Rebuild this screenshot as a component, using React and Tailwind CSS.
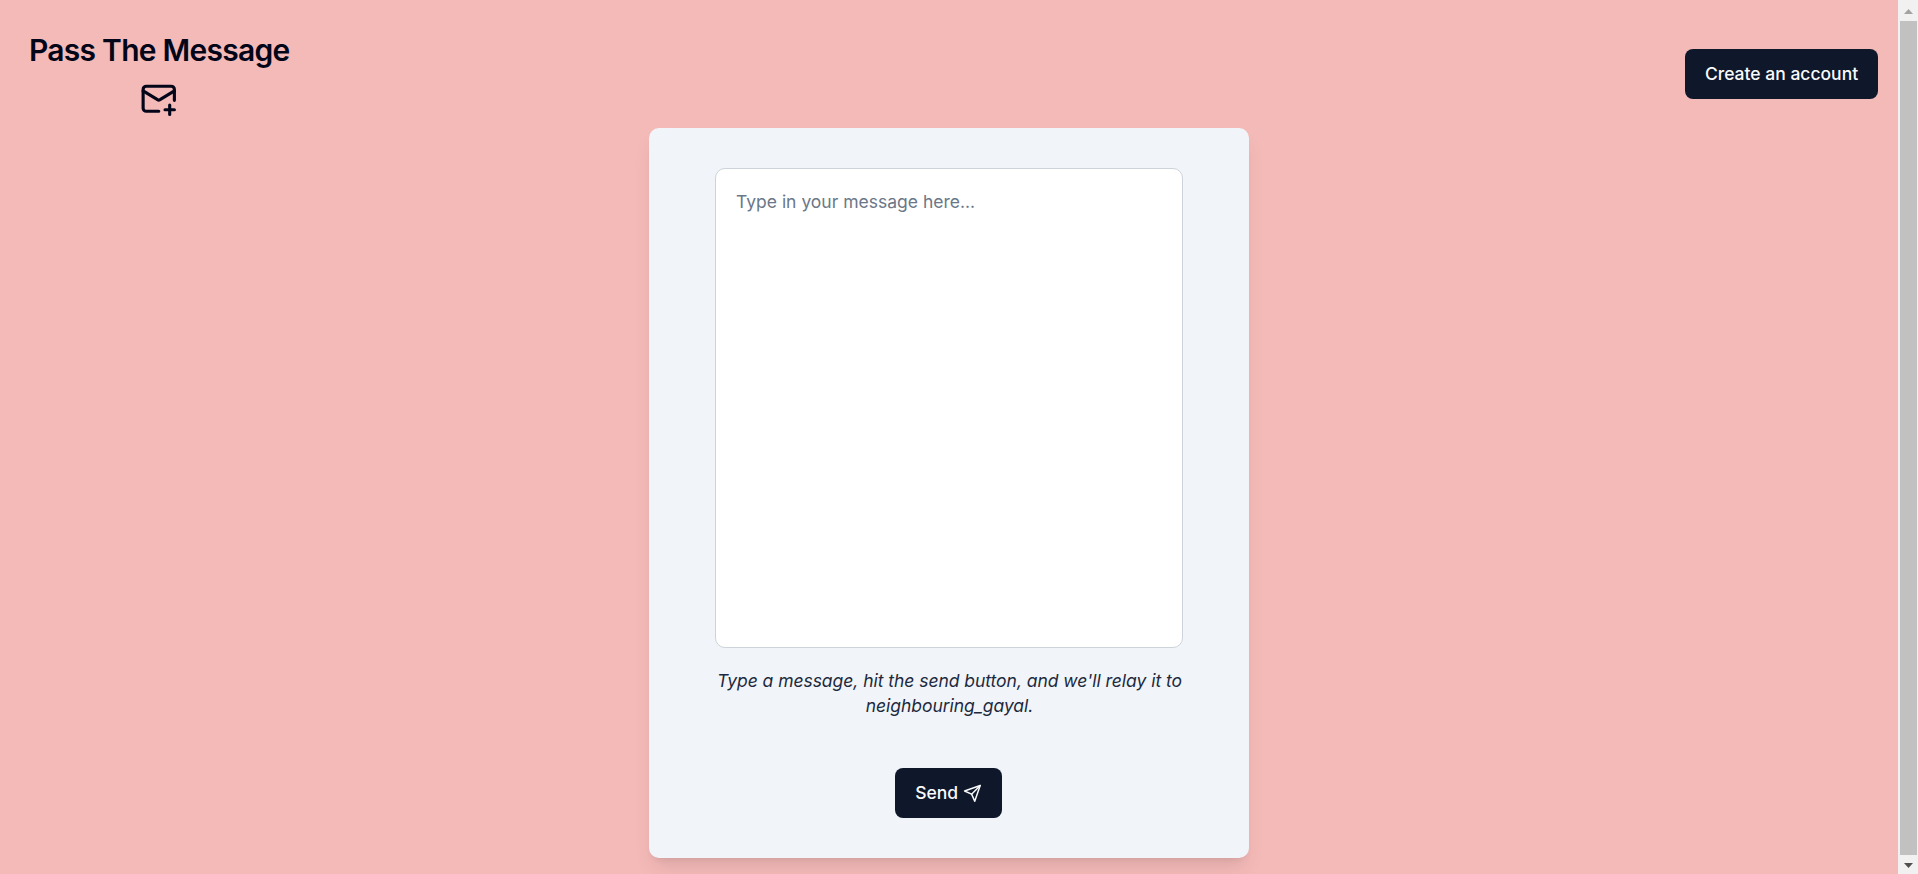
import React from "react";

function MailPlusIcon({ className }) {
  return (
    <svg viewBox="0 0 24 24" fill="none" stroke="currentColor" strokeWidth="2" strokeLinecap="round" strokeLinejoin="round" className={className}>
      <path d="M22 13V6a2 2 0 0 0-2-2H4a2 2 0 0 0-2 2v12c0 1.1.9 2 2 2h8" />
      <path d="m22 7-9.2 5.6a1.6 1.6 0 0 1-1.6 0L2 7" />
      <path d="M19 16v6M16 19h6" />
    </svg>
  );
}

function SendIcon({ className }) {
  return (
    <svg viewBox="0 0 24 24" fill="none" stroke="currentColor" strokeWidth="1.9" strokeLinecap="round" strokeLinejoin="round" className={className}>
      <path d="m22 2-7 20-4-9-9-4Z" />
      <path d="M22 2 11 13" />
    </svg>
  );
}

function Header() {
  return (
    <header className="flex h-32 items-start justify-between pr-5 pl-[29px]">
      <div className="flex flex-col items-center pt-8">
        <h1 className="text-[30px] leading-9 font-semibold tracking-tight">Pass The Message</h1>
        <MailPlusIcon className="mt-3 size-[37.5px]" />
      </div>
      <button className="mt-[49px] h-[50px] w-[193px] rounded-[8px] bg-slate-900 text-[17.5px] font-medium text-slate-50">
        Create an account
      </button>
    </header>
  );
}

function MessageCard() {
  return (
    <section className="mx-auto flex h-[730px] w-[600px] flex-col items-center rounded-[10px] bg-slate-100 pt-10 shadow-[0_12px_19px_-4px_rgb(0_0_0/0.1),0_5px_7px_-5px_rgb(0_0_0/0.1)]">
      <textarea
        className="block h-[480px] w-[468px] shrink-0 resize-none rounded-[10px] border border-[#cdd3da] bg-white px-5 py-5 text-[17.5px] leading-[25px] placeholder:text-[#6b7788]"
        placeholder="Type in your message here..."
      />
      <p className="mt-5 w-[468px] pl-px text-center text-[17.5px] leading-[25px] tracking-[-0.04px] text-slate-800 italic">
        Type a message, hit the send button, and we'll relay it to neighbouring_gayal.
      </p>
      <button className="mt-[50px] mr-px flex h-[50px] w-[107px] items-center justify-center gap-[5px] rounded-[8px] bg-slate-900 text-[17.5px] font-medium text-slate-50">
        Send
        <SendIcon className="size-[18.75px]" />
      </button>
    </section>
  );
}

function Scrollbar() {
  return (
    <div className="flex w-5 flex-col items-center justify-between bg-[#f1f1f1] pt-[9px] pb-1.5">
      <svg viewBox="0 0 9 5" className="h-[5px] w-[9px] text-[#a3a3a3]">
        <path d="M4.5 0 9 5H0Z" fill="currentColor" />
      </svg>
      <div className="mt-[7px] mb-2 ml-px w-[17px] flex-1 bg-[#c1c1c1]" />
      <svg viewBox="0 0 9 5" className="h-[5px] w-[9px] text-[#505050]">
        <path d="M0 0h9L4.5 5Z" fill="currentColor" />
      </svg>
    </div>
  );
}

export default function App() {
  return (
    <div className="flex h-[874px] overflow-hidden bg-[#f4bab8] font-['Inter',sans-serif] text-slate-950">
      <main className="flex-1">
        <Header />
        <MessageCard />
      </main>
      <Scrollbar />
    </div>
  );
}
